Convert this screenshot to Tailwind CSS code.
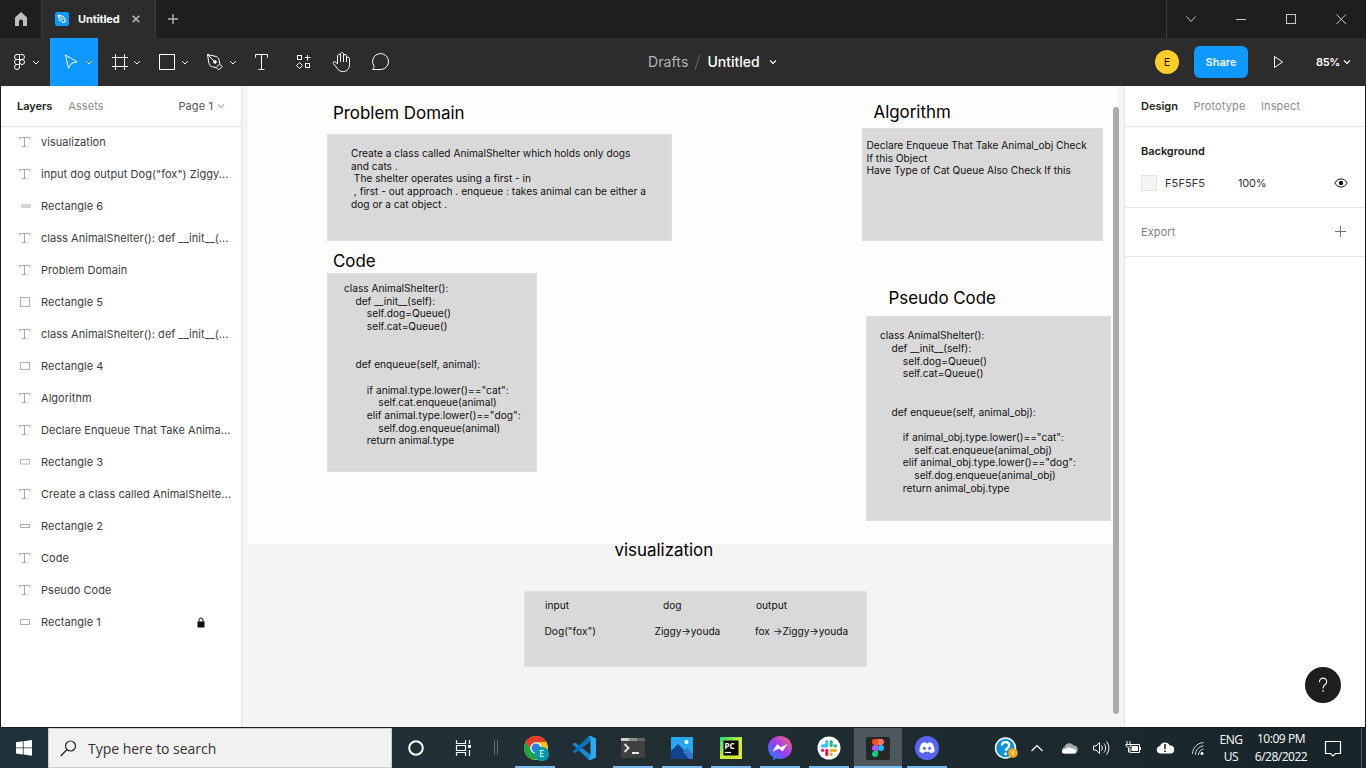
<!DOCTYPE html>
<html lang="en">
<head>
<meta charset="utf-8">
<title>Untitled</title>
<script src="https://cdn.jsdelivr.net/npm/@tailwindcss/browser@4"></script>
</head>
<body class="w-[1366px] h-[768px] overflow-hidden bg-[#1e1e1e] font-['Inter','Liberation_Sans',sans-serif] text-[11px]">
<svg class="hidden">
  <symbol id="chev" viewBox="0 0 8 6"><path d="M1 1.500 4 4.500 7 1.500" fill="none" stroke="currentColor" stroke-width="1.100"/></symbol>
  <symbol id="txt" viewBox="0 0 12 12"><path d="M.5 3.500V1.500h10.500v2M5.500 1.500v9M3.500 10.500h4" fill="none" stroke="#a9a9a9" stroke-width="1"/></symbol>
</svg>
<div class="flex flex-col w-full h-full">

  <!-- Tab bar -->
  <header class="flex h-[38px] bg-[#1e1e1e] text-white">
    <div class="w-[41px] h-full"><svg class="w-full h-full" viewBox="0 0 41 38"><path d="M15 26v-8.500l6-5.500 6 5.500V26h-4v-4.500a2 2 0 0 0-4 0V26z" fill="#bdbdbd"/></svg></div>
    <div class="flex items-center w-[115px] h-full bg-[#2c2c2c] border-x border-[#3a3a3a] pl-[13px]">
      <svg class="w-[14px] h-[14px]" viewBox="0 0 14 14"><rect width="14" height="14" rx="2" fill="#0d99ff"/><path d="M3 3l5.500 1.500 2 4.500-1.500 1.500L4.500 8.500zM3 3l4 4" fill="none" stroke="#fff" stroke-width="1"/><circle cx="7.200" cy="7.200" r=".9" fill="#fff"/><path d="M8.500 11 11 8.500" stroke="#fff"/></svg>
      <span class="ml-[9px] font-bold text-[11px] tracking-[-0.1px]">Untitled</span>
      <svg class="ml-[12px] w-[8px] h-[8px]" viewBox="0 0 8 8"><path d="M.7.7l6.600 6.600M7.300.7.7 7.300" stroke="#c4c4c4" stroke-width="1.400"/></svg>
    </div>
    <svg class="w-[36px] h-full" viewBox="156 0 36 38"><path d="M168 19h10M173 14v10" stroke="#b4b4b4" stroke-width="1.400"/></svg>
    <div class="flex-1"></div>
    <svg class="w-[200px] h-full" viewBox="1166 0 200 38" fill="none" stroke="#c8c8c8"><path d="M1165.500 0v38" stroke="#3c3c3c"/><path d="M1186.500 16.500l4.500 5 4.500-5"/><path d="M1236 19.500h10"/><rect x="1286.500" y="14.500" width="9" height="9"/><path d="M1336.500 14.500l9.500 9.500M1346 14.500l-9.500 9.500"/><path d="M1166.500 0v38" stroke="#3c3c3c"/></svg>
  </header>

  <!-- Toolbar -->
  <div class="relative flex items-center h-[48px] bg-[#2c2c2c] text-white pl-[2px]">
    <svg class="w-[48px] h-[48px]" viewBox="2 38 48 48" fill="none" stroke="#fff"><path d="M19.500 54.500h-2.500a2.500 2.500 0 0 0 0 5h2.500zM19.500 54.500h2.500a2.500 2.500 0 0 1 0 5h-2.500zM19.500 59.500h-2.500a2.500 2.500 0 0 0 0 5h2.500zM19.500 64.500h-2.500a2.500 2.500 0 1 0 2.500 2.500z"/><circle cx="22" cy="62" r="2.500"/><path d="M33 61l3 3 3-3"/></svg>
    <svg class="w-[48px] h-[48px] bg-[#0d99ff]" viewBox="50 38 48 48" fill="none" stroke="#fff"><path d="M65.500 55 77 61.800l-5.500 1.500-3 5z" stroke-linejoin="round"/><path d="M86 61l3 3 3-3"/></svg>
    <svg class="w-[48px] h-[48px]" viewBox="98 38 48 48" fill="none" stroke="#fff"><path d="M115.500 54v16M124.500 54v16M112 57.500h16M112 66.500h16"/><path d="M134 61l3 3 3-3"/></svg>
    <svg class="w-[48px] h-[48px]" viewBox="146 38 48 48" fill="none" stroke="#fff"><rect x="159.500" y="54.500" width="15" height="15"/><path d="M182 61l3 3 3-3"/></svg>
    <svg class="w-[48px] h-[48px]" viewBox="194 38 48 48" fill="none" stroke="#fff"><path d="M207.500 54.500l8.500 2c2 .6 2.800 2 3.200 4l.6 3.200-3.600 3.800-3.700-.7c-2-.5-3-1.300-3.500-3.300zM207.500 54.500l6.500 6.500M219.500 64l2.700 2.500-3.500 3.500-2.500-2.500" stroke-linejoin="round"/><circle cx="215" cy="62" r="1.300" fill="#fff"/><path d="M230 61l3 3 3-3"/></svg>
    <svg class="w-[40px] h-[48px]" viewBox="242 38 40 48" fill="none" stroke="#fff"><path d="M255.500 57.500v-3h12v3M261.500 54.500v15M258.500 69.500h6"/></svg>
    <svg class="w-[40px] h-[48px]" viewBox="282 38 40 48" fill="none" stroke="#fff"><rect x="297.500" y="55.500" width="4" height="4"/><rect x="305.500" y="63.500" width="4" height="4"/><path d="M307.500 55v5.500M305 57.500h5.500M299.500 62.500l3 3-3 3-3-3z"/></svg>
    <svg class="w-[40px] h-[48px]" viewBox="322 38 40 48" fill="none" stroke="#fff" stroke-linecap="round" stroke-linejoin="round"><path d="M337.500 63.500v-7.700c0-2 3-2 3 0v-1.800c0-2 3-2 3 0v1.800c0-1.800 3-1.800 3 0v2.700c0-1.800 3-1.800 3 0v6c0 4-2.500 7-6 7-3.500 0-5-1-6.500-3.500l-3.600-4.500c-.8-1.400.8-2.600 2.100-1.600zM340.500 55.800v5.700M343.500 55v6.500M346.500 56.500v5"/></svg>
    <svg class="w-[40px] h-[48px]" viewBox="361 38 40 48" fill="none" stroke="#fff" stroke-linejoin="round"><path d="M371.500 69.500c1.100-1.200 1.600-2 1.600-3.200a8 8 0 1 1 7.400 3.200z"/></svg>
    <div class="absolute left-[648px] inset-y-0 flex items-center text-[14px] -mt-px">
      <span class="text-[#b3b3b3] tracking-[0.1px]">Drafts</span>
      <svg class="w-[19px] h-[20px]" viewBox="0 0 19 20"><path d="M7 17.500 12 2.500" stroke="#6e6e6e"/></svg>
      <span class="font-medium">Untitled</span>
      <svg class="ml-[9px] w-[8px] h-[6px]"><use href="#chev"/></svg>
    </div>
    <div class="flex-1"></div>
    <div class="w-[24px] h-[24px] rounded-full bg-[#ffcd29] text-black/90 flex items-center justify-center text-[11px]">E</div>
    <div class="ml-[15px] w-[54px] h-[32px] rounded-[6px] bg-[#0d99ff] flex items-center justify-center font-semibold">Share</div>
    <svg class="ml-[24px] w-[12px] h-[14px]" viewBox="1272 55 12 14"><path d="M1274.500 56.500v11l8-5.500z" fill="none" stroke="#fff" stroke-linejoin="round"/></svg>
    <span class="ml-[32px] w-[24px] font-semibold tracking-[-0.35px]">85%</span>
    <svg class="ml-[3px] mr-[15px] w-[8px] h-[6px]"><use href="#chev"/></svg>
  </div>

  <!-- Workspace -->
  <main class="flex h-[641px] px-px text-[#333]">
    <aside class="w-[241px] bg-white border-r border-[#e5e5e5] flex flex-col">
      <div class="flex items-center h-[41px] border-b border-[#e5e5e5] px-[16px]">
        <span class="font-semibold text-[#222] tracking-[-0.05px]">Layers</span>
        <span class="ml-[16px] text-[#8c8c8c] tracking-[0.1px]">Assets</span>
        <span class="ml-auto text-[#555] tracking-[0.1px]">Page 1</span>
        <svg class="ml-[4px] w-[8px] h-[6px] text-[#b3b3b3]"><use href="#chev"/></svg>
      </div>
      <div class="flex flex-col -mt-px text-[#3c3c3c] tracking-[0.04px]">
        <div class="flex items-center h-8 pl-[18px]"><svg class="w-3 h-3 mr-[10px]"><use href="#txt"/></svg>visualization</div>
        <div class="flex items-center h-8 pl-[18px]"><svg class="w-3 h-3 mr-[10px]"><use href="#txt"/></svg>input dog output Dog("fox") Ziggy...</div>
        <div class="flex items-center h-8 pl-[18px]"><svg class="w-3 h-3 mr-[10px]"><rect x="2" y="4.500" width="10" height="3" fill="#d6d6d6"/><path d="M2 4.500h10M2 7.500h10" stroke="#c4c4c4" stroke-width=".6"/></svg>Rectangle 6</div>
        <div class="flex items-center h-8 pl-[18px]"><svg class="w-3 h-3 mr-[10px]"><use href="#txt"/></svg>class AnimalShelter(): def __init__(...</div>
        <div class="flex items-center h-8 pl-[18px]"><svg class="w-3 h-3 mr-[10px]"><use href="#txt"/></svg>Problem Domain</div>
        <div class="flex items-center h-8 pl-[18px]"><svg class="w-3 h-3 mr-[10px]"><rect x="1.500" y="1.500" width="9" height="9" fill="none" stroke="#b0b0b0"/></svg>Rectangle 5</div>
        <div class="flex items-center h-8 pl-[18px]"><svg class="w-3 h-3 mr-[10px]"><use href="#txt"/></svg>class AnimalShelter(): def __init__(...</div>
        <div class="flex items-center h-8 pl-[18px]"><svg class="w-3 h-3 mr-[10px]"><rect x="1.500" y="2.500" width="9" height="7" fill="none" stroke="#b0b0b0"/></svg>Rectangle 4</div>
        <div class="flex items-center h-8 pl-[18px]"><svg class="w-3 h-3 mr-[10px]"><use href="#txt"/></svg>Algorithm</div>
        <div class="flex items-center h-8 pl-[18px]"><svg class="w-3 h-3 mr-[10px]"><use href="#txt"/></svg>Declare Enqueue That Take Anima...</div>
        <div class="flex items-center h-8 pl-[18px]"><svg class="w-3 h-3 mr-[10px]"><rect x="1.500" y="3.500" width="9" height="4.500" fill="none" stroke="#bbb"/></svg>Rectangle 3</div>
        <div class="flex items-center h-8 pl-[18px]"><svg class="w-3 h-3 mr-[10px]"><use href="#txt"/></svg>Create a class called AnimalShelte...</div>
        <div class="flex items-center h-8 pl-[18px]"><svg class="w-3 h-3 mr-[10px]"><rect x="1.500" y="4.500" width="9" height="3" fill="none" stroke="#b0b0b0"/></svg>Rectangle 2</div>
        <div class="flex items-center h-8 pl-[18px]"><svg class="w-3 h-3 mr-[10px]"><use href="#txt"/></svg>Code</div>
        <div class="flex items-center h-8 pl-[18px]"><svg class="w-3 h-3 mr-[10px]"><use href="#txt"/></svg>Pseudo Code</div>
        <div class="flex items-center h-8 pl-[18px]"><svg class="w-3 h-3 mr-[10px]"><rect x="1.500" y="3.500" width="9" height="5" fill="none" stroke="#b0b0b0"/></svg>Rectangle 1
          <svg class="ml-auto mr-[36.500px] w-[8px] h-[11px]" viewBox="0 0 8 11"><rect x=".5" y="4.500" width="7" height="6" fill="#111"/><path d="M2 5V3a2 2 0 0 1 4 0v2" fill="none" stroke="#111"/></svg></div>
      </div>
    </aside>

    <!-- Free canvas -->
    <section class="relative flex-1 bg-[#f4f4f4] overflow-hidden text-[#111] text-[10.16px] leading-[12.7px] whitespace-pre">
      <div class="absolute left-[6px] top-0 w-[870px] h-[458px] bg-[#fefdfc]"></div>
      <div class="absolute left-[85px] top-[48px] w-[345px] h-[107px] bg-[#d9d9d9] border border-[#dfdfdf]"></div>
      <div class="absolute left-[620px] top-[42px] w-[241px] h-[113px] bg-[#d9d9d9] border border-[#dfdfdf]"></div>
      <div class="absolute left-[85px] top-[187px] w-[210px] h-[199px] bg-[#d9d9d9] border border-[#dfdfdf]"></div>
      <div class="absolute left-[624px] top-[230px] w-[245px] h-[205px] bg-[#d9d9d9] border border-[#dfdfdf]"></div>
      <div class="absolute left-[282px] top-[505px] w-[343px] h-[76px] bg-[#d9d9d9] border border-[#dfdfdf]"></div>

      <div class="absolute left-[91px] top-[17px] text-[16.9px] leading-[21px] text-black">Problem Domain</div>
      <div class="absolute left-[631.500px] top-[16px] text-[16.9px] leading-[21px] text-black">Algorithm</div>
      <div class="absolute left-[91px] top-[165px] text-[16.9px] leading-[21px] text-black">Code</div>
      <div class="absolute left-[646.500px] top-[202px] text-[16.9px] leading-[21px] text-black">Pseudo Code</div>
      <div class="absolute left-[372.500px] top-[454px] text-[16.9px] leading-[21px] text-black">visualization</div>

      <div class="absolute left-[109px] top-[61px]">Create a class called AnimalShelter which holds only dogs
and cats .
 The shelter operates using a first - in
 , first - out approach . enqueue : takes animal can be either a
dog or a cat object .</div>
      <div class="absolute left-[624.500px] top-[52.800px]">Declare Enqueue That Take Animal_obj Check
If this Object
Have Type of Cat Queue Also Check If this</div>
      <div class="absolute left-[102px] top-[195.900px]">class AnimalShelter():
    def __init__(self):
        self.dog=Queue()
        self.cat=Queue()


    def enqueue(self, animal):

        if animal.type.lower()=="cat":
            self.cat.enqueue(animal)
        elif animal.type.lower()=="dog":
            self.dog.enqueue(animal)
        return animal.type</div>
      <div class="absolute left-[638px] top-[243.300px]">class AnimalShelter():
    def __init__(self):
        self.dog=Queue()
        self.cat=Queue()


    def enqueue(self, animal_obj):

        if animal_obj.type.lower()=="cat":
            self.cat.enqueue(animal_obj)
        elif animal_obj.type.lower()=="dog":
            self.dog.enqueue(animal_obj)
        return animal_obj.type</div>
      <div class="absolute left-[303px] top-[513px]">input</div>
      <div class="absolute left-[421px] top-[513px]">dog</div>
      <div class="absolute left-[514px] top-[513px]">output</div>
      <div class="absolute left-[302.500px] top-[538.500px]">Dog("fox")</div>
      <div class="absolute left-[412.500px] top-[538.500px]">Ziggy→youda</div>
      <div class="absolute left-[513px] top-[538.500px]">fox →Ziggy→youda</div>
      <div class="absolute left-[871px] top-[21px] w-[6px] h-[607px] rounded-full bg-[#ababab]"></div>
    </section>

    <aside class="relative w-[241px] bg-white border-l border-[#e5e5e5]">
      <div class="flex items-center h-[41px] border-b border-[#e5e5e5] pl-[16px] gap-[15.500px]">
        <span class="font-semibold text-[#222]">Design</span>
        <span class="text-[#8c8c8c] tracking-[0.13px]">Prototype</span>
        <span class="text-[#8c8c8c] tracking-[0.13px]">Inspect</span>
      </div>
      <div class="h-[81px] border-b border-[#e5e5e5] pl-[16px] pt-[8px]">
        <div class="flex items-center h-8 font-semibold text-[#222] tracking-[-0.03px]">Background</div>
        <div class="flex items-center h-8">
          <div class="w-4 h-4 bg-[#f5f5f5] border border-[#e2e2e2]"></div>
          <span class="w-[73px] ml-[8px] tracking-[0.1px]">F5F5F5</span>
          <span class="tracking-[-0.2px]">100%</span>
          <svg class="ml-auto mr-[17px] w-[14px] h-[10px]" viewBox="0 0 14 10"><path d="M.8 5C2.400 2.300 4.500 1 7 1s4.600 1.300 6.200 4C11.600 7.700 9.500 9 7 9S2.400 7.700.8 5z" fill="none" stroke="#111"/><circle cx="7" cy="5" r="2.200" fill="#111"/></svg>
        </div>
      </div>
      <div class="flex items-center h-[49px] border-b border-[#e5e5e5] pl-[16px] text-[#808080] tracking-[0.1px]">Export
        <svg class="ml-auto mr-[19px] w-[11px] h-[11px] -mt-px" viewBox="0 0 11 11"><path d="M0 5.500h11M5.500 0v11" stroke="#777"/></svg>
      </div>
      <div class="absolute left-[180px] top-[581px] w-[36px] h-[36px] rounded-full bg-[#1e1e1e]"><svg class="w-full h-full" viewBox="0 0 36 36"><path d="M14.500 15.300v-.6a3.600 3.600 0 0 1 7.200 0c0 1.800-1 2.600-2 3.300s-1.600 1.400-1.600 3v.6" fill="none" stroke="#fff" stroke-width="1.100"/><circle cx="18.100" cy="23.900" r=".8" fill="#fff"/></svg></div>
    </aside>
  </main>

  <!-- Taskbar -->
  <footer class="relative flex h-[41px] bg-linear-to-r from-[#1f3139] via-[#212e34] to-[#17242a] border-t border-[#1a1f22] text-white font-['Open_Sans','Noto_Sans',sans-serif]">
    <svg class="w-[48px] h-[40px]" viewBox="0 728 48 40" fill="#fff"><path d="M16 742.300l6.800-1v6.200H16zM23.600 741.200l8.400-1.200v7.500h-8.400zM16 748.300h6.800v6.200l-6.800-1zM23.600 748.300H32v7.500l-8.400-1.200z"/></svg>
    <div class="flex items-center w-[344px] h-[40px] bg-[#f2f2f2] border border-[#c9c9c9] pl-[11px] text-[#333]">
      <svg class="w-[17px] h-[17px]" viewBox="0 0 17 17" fill="none" stroke="#222" stroke-width="1.200"><circle cx="10.500" cy="6" r="5"/><path d="M7 9.500.8 16"/></svg>
      <span class="ml-[11px] text-[14px] tracking-[-0.03px]">Type here to search</span>
    </div>
    <svg class="w-[119px] h-[40px]" viewBox="392 728 119 40" fill="none" stroke="#fff"><circle cx="416" cy="748" r="6.800" stroke-width="2"/><path d="M456.500 740v3.500h9V740M456.500 756v-3.500h9v3.500M456.500 745.500h9v5h-9zM469.500 740v4M469.500 750v6" stroke-width="1.200"/><rect x="468" y="745" width="3" height="3" fill="#fff" stroke="none"/><path d="M494.500 740v15M497.500 740v15" stroke="#5e696e"/></svg>
    <div class="flex">
      <div class="w-[49px] relative"><svg class="w-[49px] h-[40px]" viewBox="510.500 728 49 40"><circle cx="535.500" cy="748" r="12" fill="#fbc116"/><path d="M525.100 742a12 12 0 0 1 20.800 0H535.500l-5 9z" fill="#e33b2e"/><path d="M525.100 742a12 12 0 0 0 9.400 18l5.500-9.500-9-.5z" fill="#1ea446"/><circle cx="535.500" cy="748" r="5.800" fill="#fff"/><circle cx="535.500" cy="748" r="4.500" fill="#2f7de1"/><circle cx="541.300" cy="754" r="7.300" fill="#0a97a7"/><text x="541.300" y="757.300" font-size="9" fill="#fff" text-anchor="middle">E</text></svg><div class="absolute bottom-0 left-[4px] w-[40px] h-[2px] bg-[#76b9ed]"></div></div>
      <svg class="w-[49px] h-[40px]" viewBox="560 728 49 40"><path d="M572.500 744.200l2.500-1.700 16 12.500v5l-1.500.5z" fill="#1a8ad2"/><path d="M572.500 751.800l2.500 1.700 16-12.500v-5l-1.500-.5z" fill="#0b72b8"/><path d="M590 735.700l6 2.800v19l-6 2.800-1-1.300 1.500-2v-18.500l-1.500-1.500z" fill="#2ba9f1"/></svg>
      <div class="w-[49px] relative"><svg class="w-[49px] h-[40px]" viewBox="609 728 49 40"><rect x="621" y="738" width="24" height="20" rx="1" fill="#404040"/><path d="M621 738h8v3h-8z" fill="#cfcfcf"/><path d="M629 738h8v3h-8z" fill="#8e8e8e"/><path d="M637 738h8v3h-8z" fill="#666"/><path d="M624.500 744l4 4-4 4" fill="none" stroke="#ddd" stroke-width="2"/><path d="M632 753h7" stroke="#fff" stroke-width="1.800"/></svg><div class="absolute bottom-0 left-[4px] w-[40px] h-[2px] bg-[#76b9ed]"></div></div>
      <div class="w-[49px] relative"><svg class="w-[49px] h-[40px]" viewBox="658 728 49 40"><rect x="671" y="737" width="22" height="22" rx="1" fill="#2aa7ec"/><path d="M671 751l7-7 15 15h-22z" fill="#15448e"/><path d="M683 752l4-4 6 6v5h-4z" fill="#2d78cc"/><circle cx="686.500" cy="742" r="2" fill="#fff"/></svg><div class="absolute bottom-0 left-[4px] w-[40px] h-[2px] bg-[#76b9ed]"></div></div>
      <div class="w-[49px] relative"><svg class="w-[49px] h-[40px]" viewBox="707 728 49 40"><defs><linearGradient id="pc" x1="0" y1="0" x2="1" y2="1"><stop offset="0" stop-color="#21d789"/><stop offset=".5" stop-color="#c5ec3b"/><stop offset="1" stop-color="#e6e83a"/></linearGradient></defs><rect x="720" y="737" width="22" height="22" fill="url(#pc)"/><rect x="723.500" y="740.500" width="15" height="15" fill="#080808"/><text x="724.500" y="748.500" font-size="8" font-weight="700" fill="#fff">PC</text><path d="M725 752.500h6" stroke="#fff" stroke-width="1.200"/></svg><div class="absolute bottom-0 left-[4px] w-[40px] h-[2px] bg-[#76b9ed]"></div></div>
      <div class="w-[49px] relative"><svg class="w-[49px] h-[40px]" viewBox="756 728 49 40"><defs><linearGradient id="ms" x1="0" y1="1" x2="1" y2="0"><stop offset="0" stop-color="#0a8cff"/><stop offset=".5" stop-color="#9a3cf5"/><stop offset="1" stop-color="#ff6a68"/></linearGradient></defs><path d="M780 736c7 0 12 5 12 11.500S787 759 780 759c-1.300 0-2.500-.2-3.600-.5l-3.400 2v-3.500c-3.200-2.200-5-5.500-5-9.500 0-6.500 5-11.500 12-11.500z" fill="url(#ms)"/><path d="M773 751l4.300-6.500 3.500 3 6-2.800-4.300 6.300-3.500-2.800z" fill="#fff" stroke="#fff" stroke-width=".6"/></svg><div class="absolute bottom-0 left-[4px] w-[40px] h-[2px] bg-[#76b9ed]"></div></div>
      <div class="w-[49px] relative"><svg class="w-[49px] h-[40px]" viewBox="805 728 49 40" stroke-width="3.200" stroke-linecap="round"><circle cx="829" cy="748" r="11.500" fill="#fff"/><path d="M826.800 741.500v4M822.500 745.800h4" stroke="#36c5f0"/><path d="M831.200 741.500v4M835.500 745.800h-.5" stroke="#2eb67d"/><path d="M831.200 750.300h4.300M831.200 754.500v-.3" stroke="#ecb22e"/><path d="M822.500 750.300h.3M826.800 750.300v4.300" stroke="#e01e5a"/></svg><div class="absolute bottom-0 left-[4px] w-[40px] h-[2px] bg-[#76b9ed]"></div></div>
      <div class="w-[48px] relative bg-[#4e575b]"><svg class="w-[48px] h-[40px]" viewBox="854 728 48 40"><rect x="866" y="737" width="24" height="23" rx="2" fill="#262626"/><path d="M878 739h-3a3 3 0 0 0 0 6h3z" fill="#f24e1e"/><path d="M878 739h3a3 3 0 0 1 0 6h-3z" fill="#ff7262"/><path d="M878 745h-3a3 3 0 0 0 0 6h3z" fill="#a259ff"/><circle cx="881" cy="748" r="3" fill="#1abcfe"/><path d="M878 751h-3a3 3 0 1 0 3 3z" fill="#0acf83"/></svg><div class="absolute bottom-0 left-0 w-[48px] h-[2px] bg-[#76b9ed]"></div></div>
      <div class="w-[49px] relative"><svg class="w-[49px] h-[40px]" viewBox="902 728 49 40"><circle cx="927" cy="748" r="12" fill="#5865f2"/><path d="M921.500 743.500c1.400-.8 2.700-1.100 3.700-1.200l.6 1h2.400l.6-1c1 .1 2.300.4 3.700 1.200 1.500 2.700 2.200 5.300 2 8-1.400 1.100-2.700 1.600-4 1.800l-.9-1.500h-5.200l-.9 1.500c-1.300-.2-2.600-.7-4-1.800-.2-2.700.5-5.300 2-8z" fill="#fff"/><ellipse cx="924.400" cy="748.300" rx="1.400" ry="1.600" fill="#5865f2"/><ellipse cx="929.600" cy="748.300" rx="1.400" ry="1.600" fill="#5865f2"/></svg><div class="absolute bottom-0 left-[5px] w-[40px] h-[2px] bg-[#76b9ed]"></div></div>
    </div>
    <div class="flex-1"></div>
    <svg class="w-[226px] h-[40px]" viewBox="990 728 226 40" fill="none" stroke="#fff"><circle cx="1005.500" cy="748" r="10" fill="#0e93d2" stroke-width="1.500"/><path d="M1002 745.500c0-4.500 7.200-4.500 7.200 0 0 2.500-3.500 2.800-3.500 5.500" stroke-width="2.200"/><circle cx="1005.600" cy="754" r="1.400" fill="#fff" stroke="none"/><circle cx="1013" cy="753" r="4.800" fill="#f6a81c" stroke="none"/><path d="M1013 750.500v5"/>
      <path d="M1031.500 751l5.500-5.500 5.500 5.500" stroke-width="1.200"/>
      <path d="M1064 753.500a3.500 3.500 0 0 1 .5-6.500 5 5 0 0 1 9-1.500 4 4 0 0 1 .5 8z" fill="#a5a9ab" stroke="none"/><path d="M1063 753.500c-2.500-2 0-5 2.500-4.500 2-2 4-2 6-.5 3-.5 5 1.500 4.500 3.500-.3 1-1 1.500-2 1.500z" fill="#fff" stroke="none"/>
      <path d="M1093.500 746v4h2.500l3.500 3.500v-11l-3.500 3.500zM1101.500 745.500c1 1.500 1 3.500 0 5M1104 743.500c2.200 2.700 2.200 6.300 0 9M1106.500 741.500c3.200 4 3.200 9 0 13"/>
      <path d="M1130 744.500h9.500v8H1130v-4"/><path d="M1132 746.500h5.500v4h-5.500z" fill="#fff"/><path d="M1140.500 747v3M1127 741v3M1130 741v3M1125.500 744.500h6M1126 745c0 3 5 3 5 0M1128.500 748v4.500"/>
      <path d="M1160 753.500a3.800 3.800 0 0 1 0-7.500 5.300 5.300 0 0 1 9.800-.5 4 4 0 0 1 .7 8z" fill="#fff" stroke="none"/><path d="M1165 744v5M1165 750.500v1.500" stroke="#1b282d" stroke-width="1.600"/>
      <path d="M1192.500 754c0-6 4.500-11 11-11.500M1195.500 755c0-5 3-8.500 8-9M1198.500 755c0-3 2-5.500 5-6" stroke="#d5d9da"/><circle cx="1202" cy="753.500" r="1.500" fill="#fff" stroke="none"/>
    </svg>
    <div class="w-[30px] flex flex-col items-center pt-[3px] text-[12px] leading-[17px]"><span class="tracking-[-0.4px]">ENG</span><span class="tracking-[-0.3px]">US</span></div>
    <div class="w-[70px] flex flex-col items-center pt-[2px] text-[12px] leading-[18px]"><span class="tracking-[-0.45px]">10:09 PM</span><span class="tracking-[-0.5px]">6/28/2022</span></div>
    <svg class="w-[50px] h-[40px]" viewBox="1316 728 50 40" fill="none" stroke="#fff"><path d="M1325.500 741.500h15v12h-5l-2.500 2.500-2.500-2.500h-5z" stroke-width="1.200"/><path d="M1361.500 728v40" stroke="#4d585d"/></svg>
  </footer>
</div>
</body>
</html>
